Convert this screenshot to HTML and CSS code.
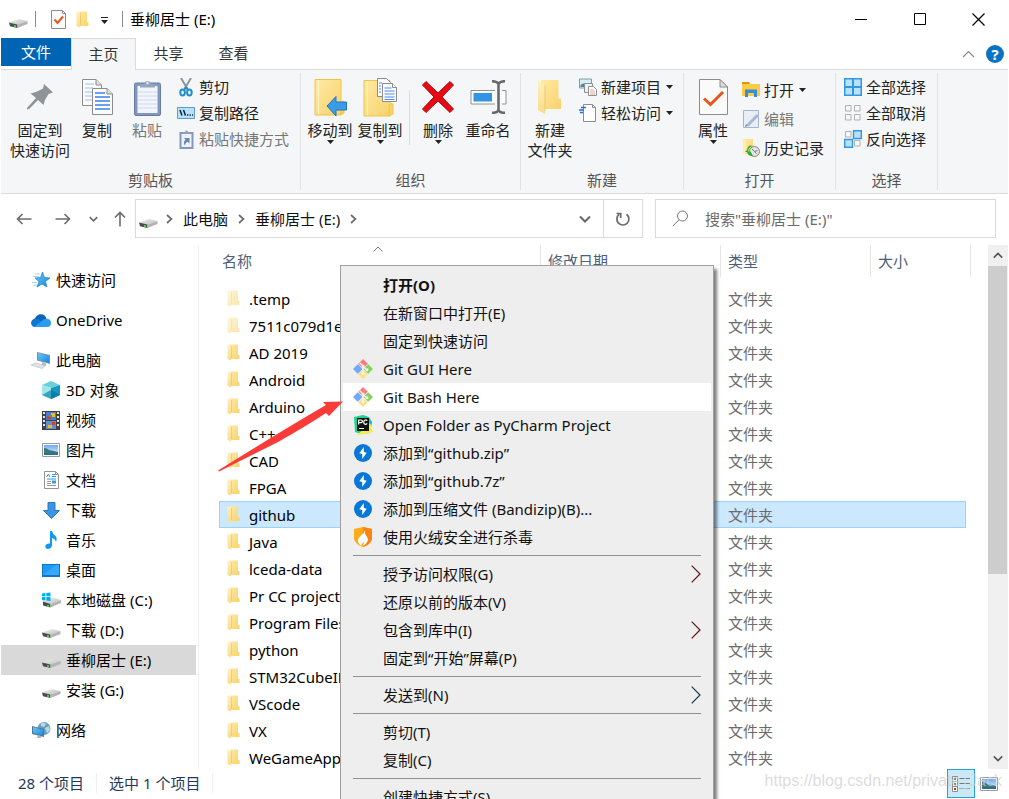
FILE: index.html
```
<!DOCTYPE html>
<html lang="zh-CN">
<head>
<meta charset="utf-8">
<title>垂柳居士 (E:)</title>
<link rel="stylesheet" href="styles.css">
</head>
<body>
<svg class="sprite" aria-hidden="true">
  <defs>
    <linearGradient id="g-folder" x1="0" y1="0" x2="1" y2="1"><stop offset="0" stop-color="#ffe9a6"/><stop offset="1" stop-color="#f8d36c"/></linearGradient>
    <linearGradient id="g-flap" x1="0" y1="0" x2="0" y2="1"><stop offset="0" stop-color="#fff0bd"/><stop offset="1" stop-color="#f9dc87"/></linearGradient>
    <linearGradient id="g-blue" x1="0" y1="0" x2="1" y2="1"><stop offset="0" stop-color="#6cc4f7"/><stop offset="1" stop-color="#1588dd"/></linearGradient>
    <linearGradient id="g-drive" x1="0" y1="0" x2="1" y2="1"><stop offset="0" stop-color="#f1f1f1"/><stop offset="1" stop-color="#bcbcbc"/></linearGradient>
    <linearGradient id="g-sky" x1="0" y1="0" x2="0" y2="1"><stop offset="0" stop-color="#6ea8f0"/><stop offset="1" stop-color="#e6f3ff"/></linearGradient>
  </defs>
  <symbol id="i-drive" viewBox="0 0 19 12"><path d="M0 6.500 10 3 18.500 5 8.500 8.500z" fill="url(#g-drive)"/><path d="M0 6.500 8.500 8.500V12L1 10.200z" fill="#4b4b4b"/><path d="M8.500 8.500 18.500 5V8L8.500 12z" fill="#b4b4b4"/><path d="M5 9h2v2H5z" fill="#35d24c"/></symbol>
  <symbol id="i-windrive" viewBox="0 0 19 16"><path d="M1 9.500 11 5.500l8 2.500-10.500 4z" fill="url(#g-drive)"/><path d="M1 9.500 8.500 12v3.500L1 13.500z" fill="#4b4b4b"/><path d="M8.500 12 19 8v3l-10.500 4.500z" fill="#b4b4b4"/><path d="M5 13h2v2H5z" fill="#35d24c"/><path d="M0 1.500 3.500 1v3.300H0zM4.300 1 8.500.4v3.900H4.300zM0 5h3.500v3.500L0 8zM4.300 5h4.200v4L4.300 8.500z" fill="#00adef"/></symbol>
  <symbol id="i-folder" viewBox="0 0 13 17"><path d="M2.500.5H11v10.500h1.500V15H3z" fill="url(#g-folder)"/><path d="M.5.5 4.500 2v11.500L4 16.500.5 15z" fill="url(#g-flap)"/><path d="M4.500 2v12" stroke="#e9c358" stroke-width=".7"/></symbol>
  <symbol id="i-bigfolder" viewBox="0 0 26 36"><path d="M4 1h17.500v18.500H24V30H6z" fill="url(#g-folder)"/><path d="M1 1 8 6.500V35L1 31z" fill="url(#g-flap)"/><path d="M8 6.500V32" stroke="#eec969" stroke-width="1"/></symbol>
  <symbol id="i-check" viewBox="0 0 15 19"><path d="M.5.5h11l3 3v15H.5z" fill="#fafafa" stroke="#8c8c8c"/><path d="M11.500.5v3h3" fill="none" stroke="#8c8c8c"/><path d="M3.500 9.500 6.500 13 12 6.500" fill="none" stroke="#e8551c" stroke-width="2"/></symbol>
  <symbol id="i-props" viewBox="0 0 29 38"><path d="M.5 1.500H21L28.500 9v27.500H.5z" fill="#fafafa" stroke="#8c8c8c"/><path d="M21 1.500V9h7.500z" fill="#ddd" stroke="#8c8c8c"/><path d="M5 20.500 11.500 26.500 24 14" fill="none" stroke="#e8551c" stroke-width="3"/></symbol>
  <symbol id="i-pin" viewBox="0 0 26 26"><path d="M17 0 26 8.500 21.500 10 18 16l-1.500 5L11 16 2 25 0 25.500V24L9 14 3.500 9.500 9 8 16 4.500z" fill="#8f9498"/></symbol>
  <symbol id="i-copy" viewBox="0 0 31 36"><g fill="#fbfbfb" stroke="#8c8c8c"><path d="M.5.5H14l5.500 5.500v20.500H.5z"/><path d="M10.500 9.500H25l5.500 5.500v20.500h-20z"/><path d="M25 9.500V15h5.500" fill="#ddd"/><path d="M14 .5V6h5.500" fill="#ddd"/></g><path d="M3 5h9M3 9h8M3 13h7M3 17h7M3 21h7" stroke="#9dbdf0"/><path d="M13 14h10M13 18h15M13 22h15M13 26h15M13 30h15" stroke="#3c83ec" stroke-width="1.400"/></symbol>
  <symbol id="i-paste" viewBox="0 0 27 37"><rect x=".5" y="4" width="26" height="32.500" rx="1.500" fill="#8397bd" stroke="#667ba6"/><path d="M3.500 7h20v27h-20z" fill="#f2f6fc"/><path d="M4 13h19M4 17h19M4 21h19M4 25h19M4 29h19" stroke="#cbd8eb"/><path d="M6 8.500V5h4.500a3 3 0 0 1 6 0H21v3.500z" fill="#96a6be"/><circle cx="13.500" cy="4" r="1.200" fill="#eef"/></symbol>
  <symbol id="i-cut" viewBox="0 0 14 19"><path d="M2 0 8.500 11M12 0 5.500 11" stroke="#8c949c" stroke-width="2" fill="none"/><g fill="none" stroke="#1e8fcb" stroke-width="2"><ellipse cx="3.600" cy="14.500" rx="2.300" ry="3"/><ellipse cx="10.400" cy="14.500" rx="2.300" ry="3"/><path d="M5 12 7 9.500 9 12"/></g></symbol>
  <symbol id="i-path" viewBox="0 0 18 12"><path d="M.5.500h17v11H.5z" fill="#b7e0fb" stroke="#5f9cc4"/><path d="M3 3 5 8.500M6.500 3 8.500 8.500" stroke="#123" stroke-width="1.500"/><path d="M10 8h1.300M12.500 8h1.300M15 8h1" stroke="#123" stroke-width="1.300"/></symbol>
  <symbol id="i-pastelink" viewBox="0 0 15 19"><path d="M1.500 3h12v15h-12z" fill="#eef3fa" stroke="#8297bd" stroke-width="2"/><path d="M4 4V2h2a1.500 1.500 0 0 1 3 0h2v2z" fill="#92a2bd"/><path d="M5 8h5.500v5.500l-2-1.700Q6 13 6 15.500 3.500 12 6.500 9.700z" fill="#6c84b2"/></symbol>
  <symbol id="i-move" viewBox="0 0 33 38"><path d="M1 1.500h26V37H1z" fill="url(#g-folder)" stroke="#ecc54c"/><path d="M4.500 2v34" stroke="#fff3c7"/><path d="M27 24q3-2 3 1v10l-3 2z" fill="#f8d364" stroke="#ecc54c"/><path d="M13 28 22 18.500V24h10.500v8H22v6z" fill="#3a9be8" stroke="#2076b9"/></symbol>
  <symbol id="i-copyto" viewBox="0 0 34 39"><path d="M1 2.500h26V38H1z" fill="url(#g-folder)" stroke="#ecc54c"/><path d="M4.500 3v34" stroke="#fff3c7"/><path d="M26 27q4-3 4 0v9l-4 2z" fill="#f8d364" stroke="#ecc54c"/><g fill="#fbfbfb" stroke="#8c8c8c"><path d="M14.500.5h9l4 4v14h-13z"/><path d="M19.500 5.500h10l4 4v14h-14z"/><path d="M29.500 5.500v4h4"/></g><path d="M21.500 10h7M21.500 13h10M21.500 16h10M21.500 19h10M21.500 21.500h10M16 5h3M16 8h2M16 11h2M16 14h2" stroke="#4b8cec"/></symbol>
  <symbol id="i-delete" viewBox="0 0 32 32"><path d="M4 .5 16 12 28 .5 31.500 4 20 16 31.500 28 28 31.500 16 20 4 31.500.5 28 12 16 .5 4z" fill="#e50b14" stroke="#b5060d"/></symbol>
  <symbol id="i-rename" viewBox="0 0 37 34"><path d="M25 10.500H1V24h24" fill="#fff" stroke="#909090"/><path d="M32 10.500h4V24h-4" fill="#fff" stroke="#909090"/><path d="M3.500 13h18.500v8.500H3.500z" fill="#3095e3"/><path d="M22 1.200q5.500 0 6.500 3 1-3 6.500-3M28.500 4v26M22 32.800q5.500 0 6.500-3 1 3 6.500 3" fill="none" stroke="#666" stroke-width="2.500"/></symbol>
  <symbol id="i-newitem" viewBox="0 0 18 18"><path d="M.5 1h12v9H.5z" fill="#d9edf9" stroke="#7a9cad"/><path d="M1.500 7q4-4 10 1v1h-10z" fill="#4a8c94"/><path d="M5.500 5.500h8v9h-8z" fill="#f1f1f1" stroke="#909090"/><path d="M9.500 8.500h5l3 3v6h-8z" fill="#fff" stroke="#909090"/><path d="M11 12h4M11 14h5M11 16h5" stroke="#e6a895"/></symbol>
  <symbol id="i-access" viewBox="0 0 18 18"><path d="M4.500.5h9l3 3v14h-12z" fill="#fff" stroke="#8c8c8c"/><path d="M13.500.5v3h3" fill="none" stroke="#8c8c8c"/><path d="M2 3.500h5M0 6h5M1 8.500h3" stroke="#2870c5" stroke-width="1.300"/></symbol>
  <symbol id="i-open" viewBox="0 0 18 17"><path d="M0 1h7l1.500 2H18v12H0z" fill="#fdca45"/><path d="M0 1h7l1 2H0z" fill="#d9970f"/><path d="M3 16V8.500h12V16h-3v-4H6v4z" fill="#338fd5"/></symbol>
  <symbol id="i-edit" viewBox="0 0 17 18"><path d="M.5.500h15v17H.5z" fill="#e8eef8" stroke="#a6b5cd"/><path d="M3 15 13.500 4 16 6 5.500 16.500z" fill="#a9bad3"/><path d="m2 17 1-3 2 2z" fill="#7d91b4"/></symbol>
  <symbol id="i-history" viewBox="0 0 18 18"><path d="M1 0h10v15H2z" fill="url(#g-folder)"/><path d="M1 0 4 2v14L1 14z" fill="#ffedb0"/><circle cx="12.500" cy="12.500" r="5" fill="#e5e5e5" stroke="#848484"/><path d="m10 10 2.500 2.500 3-1M12.500 12.500l2 2" stroke="#777" fill="none"/><path d="M3 13h3q0-5 5-6Q6 5 5 11zM5 12.500q1 5 6 4.500l-2.500-4.500z" fill="#20b22f"/></symbol>
  <symbol id="i-all" viewBox="0 0 18 18"><path d="M0 0h18v18H0z" fill="#3296e3"/><path d="M1.500 1.500h6.500v6.500H1.500zM10 1.500h6.500v6.500H10zM1.500 10h6.500v6.500H1.500zM10 10h6.500v6.500H10z" fill="#b8e2fc"/></symbol>
  <symbol id="i-none" viewBox="0 0 18 18"><path d="M1.500 1.500h5.500v5.500H1.500zM10.500 1.500H16v5.500h-5.500zM1.500 10.500h5.500V16H1.500zM10.500 10.500H16V16h-5.500z" fill="#f8f8f8" stroke="#b0b0b0"/></symbol>
  <symbol id="i-invert" viewBox="0 0 18 18"><path d="M1.500 1.500h5.500v5.500H1.500zM10.500 10.500H16V16h-5.500z" fill="#f8f8f8" stroke="#b0b0b0"/><path d="M9.500.700h7.800v7.800H9.500zM.7 9.500h7.800v7.800H.7z" fill="#b8e2fc" stroke="#3296e3" stroke-width="1.400"/></symbol>
  <symbol id="i-star" viewBox="0 0 18 16"><path d="m10.500 0 2 5.500 5.500.5-4.500 3.500L15 15l-5-3-5 3 2-5.500L3 6l5.500-.5z" fill="url(#g-blue)" stroke="#1c83cc" stroke-width=".7"/><path d="M3 2h5M1 4.500h6M0 10.500h5M1 13h4" stroke="#8ccbf3" stroke-width=".8"/></symbol>
  <symbol id="i-cloud" viewBox="0 0 20 13"><path d="M3.500 5Q6 0 10 .2q4 .1 5.500 4.300L11 8z" fill="#0a63b8"/><path d="M4 4.500Q0 5.500.1 9 .5 13 4 13l8-5-5-3z" fill="#1078d2"/><path d="M3 12.900 13.500 5Q19.700 4 20 9q0 4-4 4z" fill="#2a9df0"/></symbol>
  <symbol id="i-pc" viewBox="0 0 20 17"><path d="m6 0 13 3v9L6 8.500z" fill="#7e919e"/><path d="m7 1 11 2.800v7L7 7.800z" fill="url(#g-blue)"/><path d="m11 10 4 1v3l-4-1z" fill="#b5bec5"/><path d="m0 13 5-2 9 3-3 2.500z" fill="#dfe5e9" stroke="#aeb8c0" stroke-width=".6"/></symbol>
  <symbol id="i-cube" viewBox="0 0 18 18"><path d="m9 0 9 4-9 3-9-3z" fill="#69cfda"/><path d="m0 4 9 3v11l-9-4z" fill="#9fe5ea"/><path d="m9 7 9-3v10l-9 4z" fill="#1596c6"/><path d="m0 14 9-5v9z" fill="#32a8ba"/><path d="m18 14-9-5v9z" fill="#0d7da8"/></symbol>
  <symbol id="i-video" viewBox="0 0 18 19"><path d="M0 0h18v19H0z" fill="#414141"/><path d="M4 1h10v8H4z" fill="#4a7dd0"/><path d="M4 10h10v8H4z" fill="#608fd9"/><path d="M1 1h2v2H1zM1 5h2v2H1zM1 9h2v2H1zM1 13h2v2H1zM15 1h2v2h-2zM15 5h2v2h-2zM15 9h2v2h-2zM15 13h2v2h-2z" fill="#e5e5e5"/><path d="M9 2h4v4H9zM6 14h4v3H6z" fill="#e5bd2b"/><path d="M5 5h4v3H5zM10 11h3v3h-3z" fill="#c5472e"/><path d="M7 4h3v2H7z" fill="#48a157"/></symbol>
  <symbol id="i-picture" viewBox="0 0 18 14"><path d="M.5.500h17v13H.5z" fill="#fff" stroke="#9b9b9b"/><path d="M2 2h14v10H2z" fill="url(#g-sky)"/><path d="M2 5q3 0 5 2 5 1 9 2v3H2z" fill="#387a75"/><path d="M2 10h14v2H2z" fill="#316c9f"/></symbol>
  <symbol id="i-doc" viewBox="0 0 15 18"><path d="M.5.500h11l3 3v14H.5z" fill="#fff" stroke="#939393"/><path d="M11.500.5v3h3" fill="none" stroke="#939393"/><path d="m2.500 6 2-3 1.500 3M8 3.500h3M8 5.500h4M3 8h9" stroke="#3193df" fill="none"/><path d="M3 10.500h4M3 12.500h4M3 14.500h9" stroke="#999"/><path d="M8 9.500h4v3H8z" fill="#4495c9"/></symbol>
  <symbol id="i-down" viewBox="0 0 17 17"><path d="M5 .5h7v8h4.500l-8 8-8-8H5z" fill="#3a94e2" stroke="#2479c0"/></symbol>
  <symbol id="i-music" viewBox="0 0 12 18"><path d="M5 0h2q.5 3 3.500 5 2 2 .5 6-.5-3-4-4v7.500Q6 18 2.500 18 0 17.500.3 15 1 12 5 12.500z" fill="#1298f1"/></symbol>
  <symbol id="i-desktop" viewBox="0 0 18 13"><path d="M0 0h18v13H0z" fill="#0f76c3"/><path d="M1 1h16v10H1z" fill="#1b9bf7"/><path d="M1 11 14 1h3v10z" fill="#35a8fb"/></symbol>
  <symbol id="i-network" viewBox="0 0 19 17"><circle cx="12" cy="6.500" r="6.500" fill="#6b9fbd"/><path d="M9 1q3-1 5 1l-2 3-3-1zM13 6l4-2 1 4-3 3z" fill="#b9d8e5"/><path d="m0 4 12 3v8L0 12z" fill="#54748c"/><path d="m1 5 10 2.800v6L1 11z" fill="url(#g-blue)"/><path d="m6 13 3 1v2H5z" fill="#a6b4bd"/></symbol>
  <symbol id="i-git" viewBox="0 0 20 20"><path d="M10 0 14.800 4.800 10 9.600 5.200 4.800z" fill="#ff7b7d"/><path d="M15.200 5.200 20 10l-4.800 4.800L10.400 10z" fill="#83d15e"/><path d="M4.800 5.200 9.600 10l-4.800 4.800L0 10z" fill="#71a7fc"/><path d="M10 10.400l4.800 4.800L10 20l-4.800-4.800z" fill="#ffe080"/><path d="M6.500 3.500 10 7V15M10 7.500l4 3.500" stroke="#f4f4f4" stroke-width="1.300" fill="none"/><circle cx="10" cy="7" r="1.500" fill="#f4f4f4"/><circle cx="10" cy="14.500" r="1.500" fill="#f4f4f4"/><circle cx="14" cy="10.700" r="1.500" fill="#f4f4f4"/></symbol>
  <symbol id="i-pycharm" viewBox="0 0 20 20"><path d="M1 2 10 0l6 2 3 5-2 11-9 1-6-2z" fill="#20d292"/><path d="m15 4 4 3-1 3-4-2z" fill="#14b5e9"/><path d="M12 13 17 8l3 9-8 2-8 1z" fill="#f4ed48"/><path d="M4 3h12v13H4z" fill="#111"/><path d="M5.700 9.500V5H8q1.500 0 1.500 1.300T8 7.700H6M14.300 5.600Q13 4.500 11.600 5.200 10.500 6 10.800 8q.6 1.500 2 1.300l1.500-.8M6 13.500h5" fill="none" stroke="#fff" stroke-width="1.200"/></symbol>
  <symbol id="i-bandizip" viewBox="0 0 18 18"><circle cx="9" cy="9" r="9" fill="#0878d8"/><path d="M9.800 3v5l2.900.7L8.200 15v-5l-2.900-.7z" fill="#fff"/></symbol>
  <symbol id="i-fire" viewBox="0 0 18 20"><path d="m9 0 9 2v10q-1 5-9 8-8-3-9-8V2z" fill="#fbac18"/><path d="M9 0l9 2v10q-1 5-9 8z" fill="#fb8414"/><path d="M11 3q-.5 4 1.500 6 3 4-.5 7.500-1 1-3 2.500.5-2 1-4-2 1-3 3.500Q3.500 16 4 12.500 5 10 7.500 8 10.500 6 11 3z" fill="#fff"/></symbol>
  <symbol id="i-chev" viewBox="0 0 7 10"><path d="m1 1 4.500 4L1 9" fill="none" stroke="#6d6d6d" stroke-width="1.700"/></symbol>
  <symbol id="i-vee" viewBox="0 0 12 8"><path d="m1 1.500 5 5 5-5" fill="none" stroke="currentColor" stroke-width="2"/></symbol>
  <symbol id="i-sub" viewBox="0 0 10 18"><path d="M.7.700 9 9 .7 17.300" fill="none" stroke="currentColor" stroke-width="1.200"/></symbol>
  <symbol id="i-tri" viewBox="0 0 7 4"><path d="M0 0h7L3.500 4z" fill="#222"/></symbol>
</svg>

<div class="window">
  <header class="titlebar">
    <svg class="tb-drive"><use href="#i-drive"/></svg>
    <span class="tb-sep"></span>
    <button class="tb-check" aria-label="属性"><svg width="15" height="19"><use href="#i-check"/></svg></button>
    <button class="tb-folder" aria-label="新建文件夹"><svg width="13" height="17"><use href="#i-folder"/></svg></button>
    <button class="tb-more" aria-label="自定义快速访问工具栏"><svg width="7" height="7" viewBox="0 0 7 7"><path d="M0 .5h7" stroke="#222"/><path d="M0 3h7L3.500 7z" fill="#222"/></svg></button>
    <span class="tb-sep"></span>
    <h1 class="title">垂柳居士 (E:)</h1>
    <div class="winbtns">
      <button aria-label="最小化"><svg width="12" height="12"><path d="M0 6.500h12" stroke="#000"/></svg></button>
      <button aria-label="最大化"><svg width="12" height="12"><path d="M.5.500h11v11H.5z" fill="none" stroke="#000"/></svg></button>
      <button aria-label="关闭"><svg width="13" height="13"><path d="m.5.500 12 12M12.500.5l-12 12" stroke="#000" stroke-width="1.200"/></svg></button>
    </div>
  </header>

  <nav class="tabs">
    <button class="tab file">文件</button>
    <button class="tab active">主页</button>
    <button class="tab">共享</button>
    <button class="tab">查看</button>
    <div class="tabs-end">
      <button aria-label="折叠功能区"><svg width="13" height="8" viewBox="0 0 13 8"><path d="m1 7 5.500-5.500L12 7" fill="none" stroke="#888" stroke-width="1.200"/></svg></button>
      <button class="help" aria-label="帮助">?</button>
    </div>
  </nav>

  <section class="ribbon">
    <div class="group g-clip">
      <div class="tools">
        <button class="big wide"><span class="pic"><svg width="26" height="26"><use href="#i-pin"/></svg></span>固定到<br>快速访问</button>
        <button class="big"><span class="pic"><svg width="31" height="36"><use href="#i-copy"/></svg></span>复制</button>
        <button class="big off"><span class="pic"><svg width="27" height="37"><use href="#i-paste"/></svg></span>粘贴</button>
        <div class="smalls">
          <button class="small"><span><svg width="14" height="19"><use href="#i-cut"/></svg></span>剪切</button>
          <button class="small"><span><svg width="18" height="12"><use href="#i-path"/></svg></span>复制路径</button>
          <button class="small off"><span><svg width="15" height="19"><use href="#i-pastelink"/></svg></span>粘贴快捷方式</button>
        </div>
      </div>
      <div class="caption">剪贴板</div>
    </div>
    <div class="group g-org">
      <div class="tools">
        <button class="big"><span class="pic"><svg width="33" height="38"><use href="#i-move"/></svg></span>移动到<svg class="tri"><use href="#i-tri"/></svg></button>
        <button class="big"><span class="pic"><svg width="34" height="39"><use href="#i-copyto"/></svg></span>复制到<svg class="tri"><use href="#i-tri"/></svg></button>
        <span class="divider"></span>
        <button class="big"><span class="pic"><svg width="32" height="32"><use href="#i-delete"/></svg></span>删除<svg class="tri"><use href="#i-tri"/></svg></button>
        <button class="big"><span class="pic"><svg width="37" height="34"><use href="#i-rename"/></svg></span>重命名</button>
      </div>
      <div class="caption">组织</div>
    </div>
    <div class="group g-new">
      <div class="tools">
        <button class="big"><span class="pic"><svg width="26" height="36"><use href="#i-bigfolder"/></svg></span>新建<br>文件夹</button>
        <div class="smalls">
          <button class="small"><span><svg width="18" height="18"><use href="#i-newitem"/></svg></span>新建项目<svg class="tri"><use href="#i-tri"/></svg></button>
          <button class="small"><span><svg width="18" height="18"><use href="#i-access"/></svg></span>轻松访问<svg class="tri"><use href="#i-tri"/></svg></button>
        </div>
      </div>
      <div class="caption">新建</div>
    </div>
    <div class="group g-open">
      <div class="tools">
        <button class="big"><span class="pic"><svg width="29" height="38"><use href="#i-props"/></svg></span>属性<svg class="tri"><use href="#i-tri"/></svg></button>
        <div class="smalls loose">
          <button class="small"><span><svg width="18" height="17"><use href="#i-open"/></svg></span>打开<svg class="tri"><use href="#i-tri"/></svg></button>
          <button class="small off"><span><svg width="17" height="18"><use href="#i-edit"/></svg></span>编辑</button>
          <button class="small"><span><svg width="18" height="18"><use href="#i-history"/></svg></span>历史记录</button>
        </div>
      </div>
      <div class="caption">打开</div>
    </div>
    <div class="group g-select">
      <div class="tools">
        <div class="smalls">
          <button class="small"><span><svg width="18" height="18"><use href="#i-all"/></svg></span>全部选择</button>
          <button class="small"><span><svg width="18" height="18"><use href="#i-none"/></svg></span>全部取消</button>
          <button class="small"><span><svg width="18" height="18"><use href="#i-invert"/></svg></span>反向选择</button>
        </div>
      </div>
      <div class="caption">选择</div>
    </div>
  </section>

  <div class="navbar">
    <button class="nv back" aria-label="后退"><svg width="16" height="12" viewBox="0 0 16 12"><path d="M15.500 6h-14M6.500 1l-5 5 5 5" fill="none" stroke="#6b6b6b" stroke-width="1.600"/></svg></button>
    <button class="nv fwd" aria-label="前进"><svg width="16" height="12" viewBox="0 0 16 12"><path d="M.5 6h14M9.500 1l5 5-5 5" fill="none" stroke="#6b6b6b" stroke-width="1.600"/></svg></button>
    <button class="nv recent" aria-label="最近浏览的位置"><svg width="9" height="6"><use href="#i-vee"/></svg></button>
    <button class="nv up" aria-label="上移"><svg width="12" height="16" viewBox="0 0 12 16"><path d="M6 15.500v-14M1 6.500l5-5 5 5" fill="none" stroke="#6b6b6b" stroke-width="1.600"/></svg></button>
    <div class="address">
      <svg class="ad-drive"><use href="#i-drive"/></svg>
      <svg class="chev"><use href="#i-chev"/></svg>
      <button class="crumb">此电脑</button>
      <svg class="chev"><use href="#i-chev"/></svg>
      <button class="crumb">垂柳居士 (E:)</button>
      <svg class="chev"><use href="#i-chev"/></svg>
      <button class="drop" aria-label="展开地址"><svg width="12" height="8"><use href="#i-vee"/></svg></button>
      <button class="refresh" aria-label="刷新"><svg width="16" height="16" viewBox="0 0 16 16"><path d="M11.500 3.200A6 6 0 1 1 4 3.400M1.500 2.500H5.700V7" fill="none" stroke="#6b6b6b" stroke-width="1.700"/></svg></button>
    </div>
    <label class="search">
      <svg width="17" height="17" viewBox="0 0 17 17"><circle cx="10.500" cy="6" r="5" fill="none" stroke="#777"/><path d="M7 10 .8 16" stroke="#777"/></svg>
      <input type="search" aria-label="搜索" placeholder='搜索"垂柳居士 (E:)"'>
    </label>
  </div>

  <main class="content">
    <aside class="tree">
      <a href="#" class="node top"><span><svg width="18" height="16"><use href="#i-star"/></svg></span>快速访问</a>
      <a href="#" class="node top"><span><svg width="20" height="13"><use href="#i-cloud"/></svg></span>OneDrive</a>
      <div class="branch">
        <a href="#" class="node top"><span><svg width="20" height="17"><use href="#i-pc"/></svg></span>此电脑</a>
        <a href="#" class="node"><span><svg width="18" height="18"><use href="#i-cube"/></svg></span>3D 对象</a>
        <a href="#" class="node"><span><svg width="18" height="19"><use href="#i-video"/></svg></span>视频</a>
        <a href="#" class="node"><span><svg width="18" height="14"><use href="#i-picture"/></svg></span>图片</a>
        <a href="#" class="node"><span><svg width="15" height="18"><use href="#i-doc"/></svg></span>文档</a>
        <a href="#" class="node"><span><svg width="17" height="17"><use href="#i-down"/></svg></span>下载</a>
        <a href="#" class="node"><span><svg width="12" height="18"><use href="#i-music"/></svg></span>音乐</a>
        <a href="#" class="node"><span><svg width="18" height="13"><use href="#i-desktop"/></svg></span>桌面</a>
        <a href="#" class="node"><span><svg width="19" height="16"><use href="#i-windrive"/></svg></span>本地磁盘 (C:)</a>
        <a href="#" class="node"><span class="low"><svg width="19" height="12"><use href="#i-drive"/></svg></span>下载 (D:)</a>
        <a href="#" class="node current"><span class="low"><svg width="19" height="12"><use href="#i-drive"/></svg></span>垂柳居士 (E:)</a>
        <a href="#" class="node"><span class="low"><svg width="19" height="12"><use href="#i-drive"/></svg></span>安装 (G:)</a>
      </div>
      <a href="#" class="node top"><span><svg width="19" height="17"><use href="#i-network"/></svg></span>网络</a>
    </aside>

    <div class="files">
      <table>
        <colgroup><col class="c-name"><col class="c-date"><col class="c-type"><col class="c-size"><col class="c-end"></colgroup>
        <thead><tr><th>名称<svg class="sort" viewBox="0 0 10 6"><path d="m.5 5.500 4.500-4.500 4.500 4.500" fill="none" stroke="#777"/></svg></th><th>修改日期</th><th>类型</th><th colspan="2">大小</th></tr></thead>
        <tbody>
          <tr class="hid"><td><svg><use href="#i-folder"/></svg>.temp</td><td></td><td>文件夹</td><td></td></tr>
          <tr class="hid"><td><svg><use href="#i-folder"/></svg>7511c079d1e</td><td></td><td>文件夹</td><td></td></tr>
          <tr><td><svg><use href="#i-folder"/></svg>AD 2019</td><td></td><td>文件夹</td><td></td></tr>
          <tr><td><svg><use href="#i-folder"/></svg>Android</td><td></td><td>文件夹</td><td></td></tr>
          <tr><td><svg><use href="#i-folder"/></svg>Arduino</td><td></td><td>文件夹</td><td></td></tr>
          <tr><td><svg><use href="#i-folder"/></svg>C++</td><td></td><td>文件夹</td><td></td></tr>
          <tr><td><svg><use href="#i-folder"/></svg>CAD</td><td></td><td>文件夹</td><td></td></tr>
          <tr><td><svg><use href="#i-folder"/></svg>FPGA</td><td></td><td>文件夹</td><td></td></tr>
          <tr class="selected"><td><svg><use href="#i-folder"/></svg>github</td><td></td><td>文件夹</td><td></td></tr>
          <tr><td><svg><use href="#i-folder"/></svg>Java</td><td></td><td>文件夹</td><td></td></tr>
          <tr><td><svg><use href="#i-folder"/></svg>lceda-data</td><td></td><td>文件夹</td><td></td></tr>
          <tr><td><svg><use href="#i-folder"/></svg>Pr CC project</td><td></td><td>文件夹</td><td></td></tr>
          <tr><td><svg><use href="#i-folder"/></svg>Program Files</td><td></td><td>文件夹</td><td></td></tr>
          <tr><td><svg><use href="#i-folder"/></svg>python</td><td></td><td>文件夹</td><td></td></tr>
          <tr><td><svg><use href="#i-folder"/></svg>STM32CubeIDE</td><td></td><td>文件夹</td><td></td></tr>
          <tr><td><svg><use href="#i-folder"/></svg>VScode</td><td></td><td>文件夹</td><td></td></tr>
          <tr><td><svg><use href="#i-folder"/></svg>VX</td><td></td><td>文件夹</td><td></td></tr>
          <tr><td><svg><use href="#i-folder"/></svg>WeGameApps</td><td></td><td>文件夹</td><td></td></tr>
        </tbody>
      </table>
    </div>

    <div class="scroll">
      <button class="sc-up" aria-label="向上滚动"><svg width="10" height="7"><use href="#i-vee"/></svg></button>
      <div class="track"><div class="thumb"></div></div>
      <button aria-label="向下滚动"><svg width="10" height="7"><use href="#i-vee"/></svg></button>
    </div>
  </main>

  <footer class="status">
    <span class="stat">28 个项目</span>
    <span class="stat">选中 1 个项目</span>
    <div class="views">
      <button class="on" aria-label="详细信息"><svg width="18" height="16" viewBox="0 0 18 16"><path d="M.5.500h5v5h-5zM.5 5.500h5v5h-5zM.5 10.500h5v5h-5z" fill="#fff" stroke="#8a8a8a"/><path d="M2 2h2v2H2z" fill="#2d87c9"/><path d="M2 7h2v2H2z" fill="#63952d"/><path d="M2 12h2v2H2z" fill="#b33723"/><path d="M7.500 2.500h5M13.500 2.500H18M7.500 7.500h5M13.500 7.500H18M7.500 12.500h5M13.500 12.500H18" stroke="#777"/></svg></button>
      <button aria-label="大缩略图"><svg width="18" height="14"><use href="#i-picture"/></svg></button>
    </div>
    <span class="mark">https://blog.csdn.net/private_Jack</span>
  </footer>

  <div class="menu" role="menu">
    <button class="item strong" role="menuitem"><span></span>打开(O)</button>
    <button class="item" role="menuitem"><span></span>在新窗口中打开(E)</button>
    <button class="item" role="menuitem"><span></span>固定到快速访问</button>
    <button class="item" role="menuitem"><span><svg width="20" height="20"><use href="#i-git"/></svg></span>Git GUI Here</button>
    <button class="item hot" role="menuitem"><span><svg width="20" height="20"><use href="#i-git"/></svg></span>Git Bash Here</button>
    <button class="item" role="menuitem"><span><svg width="20" height="20"><use href="#i-pycharm"/></svg></span>Open Folder as PyCharm Project</button>
    <button class="item" role="menuitem"><span><svg width="18" height="18"><use href="#i-bandizip"/></svg></span>添加到“github.zip”</button>
    <button class="item" role="menuitem"><span><svg width="18" height="18"><use href="#i-bandizip"/></svg></span>添加到“github.7z”</button>
    <button class="item" role="menuitem"><span><svg width="18" height="18"><use href="#i-bandizip"/></svg></span>添加到压缩文件 (Bandizip)(B)...</button>
    <button class="item" role="menuitem"><span><svg width="18" height="20"><use href="#i-fire"/></svg></span>使用火绒安全进行杀毒</button>
    <hr>
    <button class="item" role="menuitem"><span></span>授予访问权限(G)<svg class="sub red"><use href="#i-sub"/></svg></button>
    <button class="item" role="menuitem"><span></span>还原以前的版本(V)</button>
    <button class="item" role="menuitem"><span></span>包含到库中(I)<svg class="sub red"><use href="#i-sub"/></svg></button>
    <button class="item" role="menuitem"><span></span>固定到“开始”屏幕(P)</button>
    <hr>
    <button class="item" role="menuitem"><span></span>发送到(N)<svg class="sub"><use href="#i-sub"/></svg></button>
    <hr>
    <button class="item" role="menuitem"><span></span>剪切(T)</button>
    <button class="item" role="menuitem"><span></span>复制(C)</button>
    <hr>
    <button class="item" role="menuitem"><span></span>创建快捷方式(S)</button>
  </div>

  <svg class="pointer" viewBox="0 0 126 72" aria-hidden="true"><path d="M0 70.500Q60 33 108 5L105 2 125 1.500 111 16 108 13Q90 25 60 42L1 71.500z" fill="#fb3b37"/></svg>
</div>
</body>
</html>
```
FILE: styles.css
```
* { box-sizing: border-box; }
body {
  margin: 0;
  background: #fff;
  color: #000;
  font: 15px/20px "Noto Sans", "Noto Sans CJK SC", sans-serif;
}
button {
  margin: 0;
  padding: 0;
  border: 0;
  background: none;
  color: inherit;
  font: inherit;
  white-space: nowrap;
}
svg { display: block; flex: none; }
.sprite { position: absolute; width: 0; height: 0; }
.window {
  position: relative;
  display: flex;
  flex-direction: column;
  height: 100vh;
  padding: 0 1px;
  overflow: hidden;
}

/* Title bar */
.titlebar { display: flex; align-items: center; height: 38px; flex: none; padding-left: 8px; }
.tb-drive { width: 19px; height: 12px; margin-top: 6px; }
.tb-sep { width: 1px; height: 16px; margin: 0 7px; background: #8a8a8a; }
.tb-check { margin: 0 10px 0 8px; }
.tb-more { margin: 0 7px 0 12px; padding-top: 3px; }
.title { margin: 0; font-size: 15px; font-weight: 400; line-height: 20px; }
.winbtns { display: flex; align-self: stretch; margin-left: auto; }
.winbtns button { display: grid; place-items: center; width: 59px; }

/* Tabs */
.tabs { display: flex; height: 32px; flex: none; border-bottom: 1px solid #dadbdc; }
.tab { width: 65px; height: 30px; color: #333; }
.tab.file { width: 70px; height: 28px; background: #0064b5; color: #fff; }
.tab.active { height: 32px; padding-bottom: 2px; border: 1px solid #dadbdc; border-bottom: 0; background: #f5f6f7; }
.tabs-end { display: flex; align-items: center; gap: 11px; margin-left: auto; padding-right: 4px; }
.help {
  width: 18px;
  height: 18px;
  border-radius: 50%;
  background: #0a74c4;
  color: #fff;
  font-weight: 700;
  line-height: 18px;
}

/* Ribbon */
.ribbon { display: flex; height: 124px; flex: none; border-bottom: 1px solid #dadbdc; background: #f5f6f7; color: #222; }
.group { display: flex; flex-direction: column; margin: 3px 0; border-right: 1px solid #e1e2e4; }
.g-clip { min-width: 300px; }
.g-org { min-width: 220px; }
.g-new { min-width: 163px; }
.g-open { min-width: 152px; }
.g-select { min-width: 102px; }
.tools { display: flex; flex: 1; padding-left: 4px; }
.g-clip .tools { padding-left: 7px; }
.g-select .tools { padding-left: 8px; }
.caption { height: 20px; color: #555; text-align: center; }
.big { display: flex; flex-direction: column; align-items: center; width: 50px; padding-top: 4px; }
.big.wide { width: 64px; }
.pic { display: grid; place-items: center; height: 40px; margin-bottom: 3px; }
.off { color: #777; }
.tri { width: 7px; height: 4px; }
.divider { width: 1px; height: 55px; margin: 17px 3px 0 4px; background: #dcdddf; }
.smalls { display: flex; flex-direction: column; padding-left: 4px; padding-top: 1px; }
.g-clip .smalls { padding-left: 5px; }
.g-select .smalls { padding-left: 0; }
.small { display: flex; align-items: center; height: 26px; gap: 4px; }
.small span { display: grid; place-items: center; width: 18px; }
.small .tri { margin-left: 1px; }
.loose { padding-top: 2px; }
.loose .small { height: 29px; }

/* Address row */
.navbar { display: flex; height: 51px; flex: none; padding: 5px 12px 7px 3px; color: #666; }
.nv { display: grid; place-items: center; }
.back { width: 40px; }
.fwd { width: 38px; }
.recent { width: 22px; }
.up { width: 31px; }
.address { display: flex; align-items: center; flex: 1; border: 1px solid #d9d9d9; padding-left: 3px; color: #111; }
.ad-drive { width: 19px; height: 12px; margin: 6px 8px 0 0; }
.chev { width: 7px; height: 10px; }
.crumb { margin: 0 10px; }
.drop { display: grid; place-items: center; width: 36px; margin-left: auto; color: #666; }
.refresh { display: grid; place-items: center; align-self: stretch; width: 39px; border-left: 1px solid #d9d9d9; }
.search { display: flex; align-items: center; flex: 0 1 341px; min-width: 0; margin-left: 12px; padding-left: 16px; border: 1px solid #d9d9d9; }
.search input { flex: 1; min-width: 0; padding: 0; margin-left: 16px; border: 0; outline: 0; background: none; font: inherit; }
.search input::placeholder { color: #6b6b6b; opacity: 1; }

/* Content */
.content { display: flex; flex: 1; min-height: 0; }
.tree { width: 198px; flex: none; padding-top: 20px; border-right: 1px solid #f0f0f0; }
.node { display: flex; align-items: center; height: 30px; margin-right: 2px; padding-left: 39px; color: #000; text-decoration: none; white-space: nowrap; }
.node.top { padding-left: 29px; }
.tree > .top + .top, .branch, .branch + .top { margin-top: 10px; }
.node span { display: grid; place-items: center; width: 22px; margin-right: 4px; }
.node .low { padding-top: 4px; }
.current { background: #d9d9d9; }

.files { flex: 1; min-width: 0; overflow: hidden; padding-left: 20px; }
table { width: 752px; border-collapse: separate; border-spacing: 0; table-layout: fixed; }
.c-name { width: 322px; }
.c-date { width: 180px; }
.c-type { width: 150px; }
.c-size { width: 95px; }
.c-end { width: 5px; }
th { position: relative; height: 32px; padding: 0 0 0 7px; border-right: 1px solid #e4e4e4; color: #4c607a; font-weight: 400; text-align: left; }
th:first-child { padding-left: 3px; }
.sort { position: absolute; top: 1px; left: 154px; width: 10px; height: 6px; }
thead::after { content: ""; display: table-row; height: 8px; }
td { height: 27px; padding: 0 0 0 7px; color: #6b6b6b; white-space: nowrap; }
td:first-child { color: #000; padding-left: 8px; }
td svg { display: inline-block; width: 13px; height: 17px; margin: -3px 9px 0 0; vertical-align: middle; }
.hid svg { opacity: .55; }
.selected td { border: 1px solid #99d1ff; border-width: 1px 0; background: #cce8ff; }
.selected td:first-child { border-left-width: 1px; padding-left: 7px; }
.selected td:last-child { border-right-width: 1px; }

.scroll { display: flex; flex-direction: column; width: 20px; flex: none; background: #f0f0f0; color: #555; }
.scroll button { display: grid; place-items: center; height: 21px; }
.sc-up svg { transform: rotate(180deg); }
.track { flex: 1; }
.thumb { height: 64%; margin-right: 1px; background: #cdcdcd; }

/* Status bar */
.status { position: relative; display: flex; align-items: center; height: 30px; flex: none; padding: 0 5px 2px; color: #1e395b; }
.stat { padding: 0 12px; border-right: 1px solid #eee; }
.views { display: flex; align-self: stretch; margin-left: auto; }
.views button { display: grid; place-items: center; width: 28px; height: 29px; }
.views .on { border: 1px solid #26a0da; background: #cbe8f6; }
.mark { position: absolute; right: 6px; bottom: 8px; color: rgba(205, 205, 205, .7); font: 16px/20px "Liberation Sans", sans-serif; }

/* Context menu */
.menu {
  position: absolute;
  top: 265px;
  left: 340px;
  width: 374px;
  padding: 5px 2px;
  border: 1px solid #a0a0a0;
  background: #eee;
  box-shadow: 3px 4px 3px rgba(0, 0, 0, .5);
}
.item { display: flex; align-items: center; width: 100%; height: 28px; padding: 0 10px 0 9px; color: #111; text-align: left; }
.item span { display: grid; place-items: center; width: 22px; margin-right: 9px; }
.strong { font-weight: 700; }
.hot { background: #fff; }
.menu hr { height: 1px; margin: 4px 10px; border: 0; background: #919191; }
.sub { width: 10px; height: 18px; margin-left: auto; color: #143a4a; }
.sub.red { color: #5a1010; }

.pointer { position: absolute; top: 400px; left: 218px; width: 126px; height: 72px; }
```
